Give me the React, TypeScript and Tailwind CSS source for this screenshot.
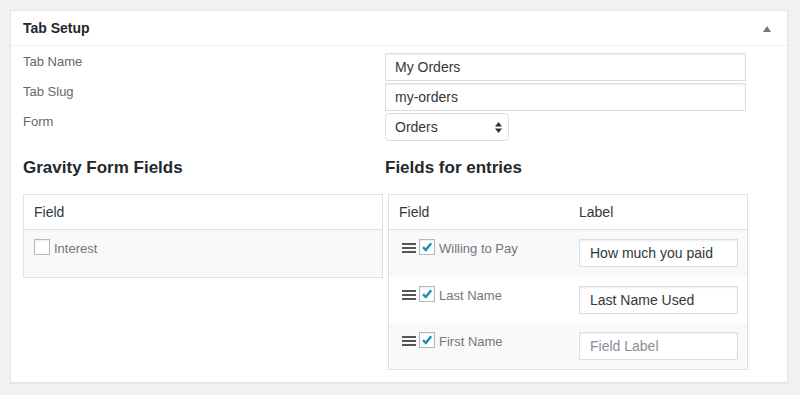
import React from "react";

function Check({ checked }: { checked?: boolean }) {
  return (
    <span className="flex h-4 w-4 shrink-0 items-center justify-center border border-[#b4b9be] bg-white shadow-[inset_0_1px_2px_rgba(0,0,0,0.07)]">
      {checked && (
        <svg width="14" height="14" viewBox="0 0 14 14">
          <path d="M3 7.2 L5.8 10 L11.2 3.2" fill="none" stroke="#1e8cbe" strokeWidth="2.4" strokeLinecap="butt" strokeLinejoin="miter" />
        </svg>
      )}
    </span>
  );
}

function Handle() {
  return (
    <span className="flex w-[14px] shrink-0 flex-col gap-[2px]">
      <span className="h-[2px] w-[14px] bg-[#555]" />
      <span className="h-[2px] w-[14px] bg-[#555]" />
      <span className="h-[2px] w-[14px] bg-[#555]" />
    </span>
  );
}

const rows = [
  { name: "Willing to Pay", label: "How much you paid", bg: "bg-[#f9f9f9]", h: "h-[47px]" },
  { name: "Last Name", label: "Last Name Used", bg: "bg-white", h: "h-[46px]" },
  { name: "First Name", label: "", bg: "bg-[#f9f9f9]", h: "h-[46px]" },
];

export default function App() {
  return (
    <div className="min-h-[395px] w-[800px] bg-[#f1f1f1] pl-[10px] pt-[10px] font-['Liberation_Sans','Inter',sans-serif] text-[13px] text-[#444]">
      <div className="w-[778px] border border-[#e5e5e5] bg-white shadow-[0_1px_1px_rgba(0,0,0,0.04)]">
        <div className="flex h-[35px] items-center justify-between border-b border-[#eee] pl-[12px] pr-[16px]">
          <span className="text-[14px] font-bold text-[#23282d]">Tab Setup</span>
          <svg width="8" height="6" viewBox="0 0 8 6" className="mt-[1px]">
            <path d="M4 0 L8 6 L0 6 Z" fill="#72777c" />
          </svg>
        </div>
        <div className="pb-[12px] pl-[12px] pt-[7px]">
          <div className="flex flex-col gap-[2px]">
            <div className="flex">
              <div className="w-[362px] pt-[1px] leading-[16px] text-[#666]">Tab Name</div>
              <div className="flex h-[28px] w-[361px] items-center border border-[#ddd] px-[9px] text-[14px] text-[#32373c] shadow-[inset_0_1px_2px_rgba(0,0,0,0.07)]">My Orders</div>
            </div>
            <div className="flex">
              <div className="w-[362px] pt-[1px] leading-[16px] text-[#666]">Tab Slug</div>
              <div className="flex h-[28px] w-[361px] items-center border border-[#ddd] px-[9px] text-[14px] text-[#32373c] shadow-[inset_0_1px_2px_rgba(0,0,0,0.07)]">my-orders</div>
            </div>
            <div className="flex">
              <div className="w-[362px] pt-[1px] leading-[16px] text-[#666]">Form</div>
              <div className="flex h-[28px] w-[124px] items-center justify-between rounded-[4px] border border-[#ddd] pl-[9px] pr-[6px] text-[14px] text-[#32373c]">
                <span>Orders</span>
                <svg width="7" height="11" viewBox="0 0 7 11">
                  <path d="M3.5 0 L7 4.5 L0 4.5 Z" fill="#333" />
                  <path d="M3.5 11 L7 6.5 L0 6.5 Z" fill="#333" />
                </svg>
              </div>
            </div>
          </div>

          <div className="mt-[17px] flex">
            <div className="w-[362px]">
              <div className="mb-[16px] h-[20px] text-[17px] font-bold leading-[20px] text-[#23282d]">Gravity Form Fields</div>
              <div className="w-[360px] border border-[#e1e1e1]">
                <div className="flex h-[35px] items-center border-b border-[#e1e1e1] px-[10px] text-[14px] text-[#32373c]">Field</div>
                <div className="flex h-[47px] items-start gap-[4px] bg-[#f9f9f9] px-[10px] pt-[9px]">
                  <Check />
                  <span className="pt-[2px] leading-[16px] text-[#72777c]">Interest</span>
                </div>
              </div>
            </div>
            <div>
              <div className="mb-[16px] h-[20px] text-[17px] font-bold leading-[20px] text-[#23282d]">Fields for entries</div>
              <div className="ml-[3px] w-[360px] border border-[#e1e1e1]">
                <div className="flex h-[35px] items-center border-b border-[#e1e1e1] text-[14px] text-[#32373c]">
                  <span className="w-[190px] pl-[10px]">Field</span>
                  <span>Label</span>
                </div>
                {rows.map((r) => (
                  <div key={r.name} className={`flex pt-[9px] ${r.h} ${r.bg}`}>
                    <div className="flex w-[190px] items-start pl-[13px]">
                      <div className="mt-[4px]"><Handle /></div>
                      <div className="ml-[3px]"><Check checked /></div>
                      <span className="ml-[4px] pt-[2px] leading-[16px] text-[#72777c]">{r.name}</span>
                    </div>
                    <div className={`flex h-[28px] w-[159px] items-center border border-[#ddd] bg-white px-[10px] text-[14px] shadow-[inset_0_1px_2px_rgba(0,0,0,0.07)] ${r.label ? "text-[#32373c]" : "text-[#8a8f95]"}`}>
                      {r.label || "Field Label"}
                    </div>
                  </div>
                ))}
              </div>
            </div>
          </div>
        </div>
      </div>
    </div>
  );
}
